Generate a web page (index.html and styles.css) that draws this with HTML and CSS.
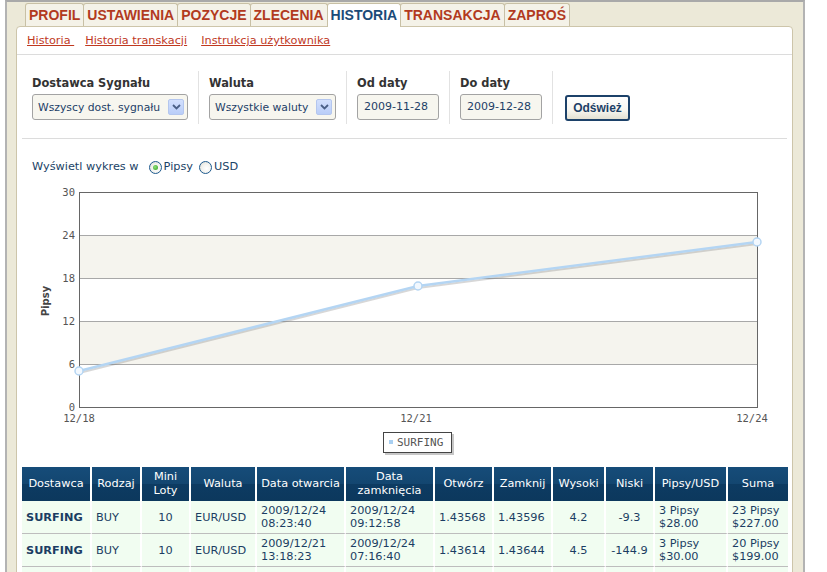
FILE: index.html
```html
<!DOCTYPE html>
<html lang="pl">
<head>
<meta charset="utf-8">
<title>Historia</title>
<link rel="stylesheet" href="styles.css">
</head>
<body>
<div class="frame">
  <nav class="tabs">
    <a class="tab">PROFIL</a>
    <a class="tab">USTAWIENIA</a>
    <a class="tab">POZYCJE</a>
    <a class="tab">ZLECENIA</a>
    <a class="tab active">HISTORIA</a>
    <a class="tab">TRANSAKCJA</a>
    <a class="tab">ZAPROŚ</a>
  </nav>
  <div class="panel">
    <div class="sublinks">
      <a class="sublink">Historia&nbsp;</a>
      <a class="sublink sublink-wide">Historia transkacji</a>
      <a class="sublink">Instrukcja użytkownika</a>
    </div>
    <div class="content">
      <div class="filters">
        <div class="fgroup">
          <div class="flabel">Dostawca Sygnału</div>
          <div class="select sel-provider"><span class="sel-text">Wszyscy dost. sygnału</span><span class="arrow"><svg width="9" height="6" viewBox="0 0 9 6"><path d="M1 1 L4.5 4.5 L8 1" stroke="#4a5f86" stroke-width="1.8" fill="none"/></svg></span></div>
        </div>
        <div class="fgroup">
          <div class="flabel">Waluta</div>
          <div class="select sel-currency"><span class="sel-text">Wszystkie waluty</span><span class="arrow"><svg width="9" height="6" viewBox="0 0 9 6"><path d="M1 1 L4.5 4.5 L8 1" stroke="#4a5f86" stroke-width="1.8" fill="none"/></svg></span></div>
        </div>
        <div class="fgroup">
          <div class="flabel">Od daty</div>
          <div class="dateinput">2009-11-28</div>
        </div>
        <div class="fgroup">
          <div class="flabel">Do daty</div>
          <div class="dateinput">2009-12-28</div>
        </div>
        <div class="fgroup fgroup-btn">
          <button class="btn">Odśwież</button>
        </div>
      </div>
      <div class="chart-opts">
        <span>Wyświetl wykres w</span>
        <span class="radio checked"></span><span>Pipsy</span>
        <span class="radio radio-usd"></span><span>USD</span>
      </div>
      <svg class="chart" width="766" height="280" viewBox="0 0 766 280">
        <rect x="57" y="55" width="678" height="43" fill="#f5f4ee"/>
        <rect x="57" y="141" width="678" height="43" fill="#f5f4ee"/>
        <g stroke="#a8a8a8" stroke-width="1">
          <line x1="57" y1="55.5" x2="735" y2="55.5"/>
          <line x1="57" y1="98.5" x2="735" y2="98.5"/>
          <line x1="57" y1="141.5" x2="735" y2="141.5"/>
          <line x1="57" y1="184.5" x2="735" y2="184.5"/>
        </g>
        <rect x="57.5" y="12.5" width="678" height="215" fill="none" stroke="#666" stroke-width="1"/>
        <g class="axis" text-anchor="end">
          <text x="53" y="16">30</text>
          <text x="53" y="59">24</text>
          <text x="53" y="102">18</text>
          <text x="53" y="145">12</text>
          <text x="53" y="188">6</text>
          <text x="53" y="231">0</text>
        </g>
        <g class="axis" text-anchor="middle">
          <text x="57" y="242">12/18</text>
          <text x="394" y="242">12/21</text>
          <text x="730" y="242">12/24</text>
        </g>
        <text class="ytitle" x="24" y="124" text-anchor="middle" transform="rotate(-90 24 121)">Pipsy</text>
        <polyline points="57,193 396,108 735,64" fill="none" stroke="#7a7a7a" stroke-opacity="0.3" stroke-width="2"/>
        <polyline points="57,191 396,106 735,62" fill="none" stroke="#b4d5f3" stroke-width="2.5"/>
        <g fill="#f2f8fe" stroke="#b4d5f3" stroke-width="1.5">
          <circle cx="57" cy="191" r="4"/>
          <circle cx="396" cy="106" r="4"/>
          <circle cx="735" cy="62" r="4"/>
        </g>
        <rect x="363" y="254" width="69" height="21" fill="#999" fill-opacity="0.55"/>
        <rect x="361.5" y="252.5" width="68" height="20" fill="#fff" stroke="#444"/>
        <rect x="367" y="260" width="4" height="4" fill="#a9d0f2"/>
        <text class="legend" x="375" y="266">SURFING</text>
      </svg>
      <table class="grid">
        <colgroup>
          <col class="c70"><col class="c50"><col class="c49"><col class="c66"><col class="c89"><col class="c89">
          <col class="c59"><col class="c59"><col class="c53"><col class="c49"><col class="c73"><col class="c60">
        </colgroup>
        <thead>
          <tr>
            <th>Dostawca</th><th>Rodzaj</th><th>Mini<br>Loty</th><th>Waluta</th><th>Data otwarcia</th><th>Data<br>zamknięcia</th>
            <th>Otwórz</th><th>Zamknij</th><th>Wysoki</th><th>Niski</th><th>Pipsy/USD</th><th>Suma</th>
          </tr>
        </thead>
        <tbody>
          <tr>
            <td class="prov">SURFING</td><td>BUY</td><td class="ctr">10</td><td>EUR/USD</td>
            <td>2009/12/24<br>08:23:40</td><td>2009/12/24<br>09:12:58</td>
            <td>1.43568</td><td>1.43596</td><td class="ctr">4.2</td><td class="ctr">-9.3</td>
            <td>3 Pipsy<br>$28.00</td><td>23 Pipsy<br>$227.00</td>
          </tr>
          <tr>
            <td class="prov">SURFING</td><td>BUY</td><td class="ctr">10</td><td>EUR/USD</td>
            <td>2009/12/21<br>13:18:23</td><td>2009/12/24<br>07:16:40</td>
            <td>1.43614</td><td>1.43644</td><td class="ctr">4.5</td><td class="ctr">-144.9</td>
            <td>3 Pipsy<br>$30.00</td><td>20 Pipsy<br>$199.00</td>
          </tr>
          <tr>
            <td></td><td></td><td></td><td></td><td></td><td></td>
            <td></td><td></td><td></td><td></td><td></td><td></td>
          </tr>
        </tbody>
      </table>
    </div>
  </div>
</div>
</body>
</html>
```
FILE: styles.css
```css
* { box-sizing: border-box; }

body {
  margin: 0;
  background: #ffffff;
  font-family: "DejaVu Sans", Verdana, sans-serif;
  font-size: 11.3px;
  color: #1b3d63;
}

.frame {
  margin-left: 5px;
  width: 800px;
  min-height: 620px;
  background: #ece9d8;
  border: 2px solid #b3b3b3;
  border-top-color: #a9a9a9;
  border-bottom: none;
  padding: 1px 10px 0 9px;
}

/* Tabs */
.tabs {
  display: flex;
  margin-left: 9px;
  height: 23px;
  position: relative;
  z-index: 1;
}

.tab {
  display: block;
  height: 23px;
  padding: 0 3px;
  margin-right: -1px;
  border: 1px solid #c8c0a5;
  border-bottom: none;
  border-radius: 3px 3px 0 0;
  background: #f4f2e8;
  color: #b23a1e;
  font-family: "Liberation Sans", Arial, sans-serif;
  font-weight: bold;
  font-size: 14px;
  line-height: 22px;
  text-decoration: none;
}

.tab.active {
  background: #ffffff;
  color: #1b4b78;
  height: 24px;
}

/* Panel */
.panel {
  background: #ffffff;
  border: 1px solid #cdc5aa;
  border-radius: 4px 4px 0 0;
  min-height: 600px;
}

.sublinks {
  display: flex;
  height: 28px;
  padding: 7px 0 0 10px;
  border-bottom: 1px solid #dcdcdc;
  line-height: 14px;
}

.sublink {
  color: #c0391f;
  text-decoration: underline;
  margin-right: 11px;
}

.sublink-wide { margin-right: 14px; }

.content {
  padding: 0 5px;
}

/* Filters */
.filters {
  display: flex;
  padding: 16px 0 14px;
  border-bottom: 1px solid #dcdcdc;
}

.fgroup {
  padding: 5px 10px 4px;
  border-right: 1px solid #e2e2e2;
}

.fgroup-btn {
  border-right: none;
  padding: 24px 12px 0;
}

.flabel {
  font-weight: bold;
  font-size: 11.4px;
  color: #333333;
  line-height: 14px;
  margin-bottom: 4px;
}

.select {
  display: flex;
  align-items: center;
  justify-content: space-between;
  height: 26px;
  border: 1px solid #a3a3a3;
  border-radius: 3px;
  background: #f7f6ef;
  padding: 0 3px 0 5px;
  color: #1d4067;
  font-size: 10.8px;
}

.sel-provider { width: 156px; }
.sel-currency { width: 127px; }

.arrow {
  display: flex;
  align-items: center;
  justify-content: center;
  width: 16px;
  height: 16px;
  background: linear-gradient(#d3e0fd, #b9cdf8);
  border: 1px solid #b4c6ee;
  border-radius: 2px;
}

.dateinput {
  width: 82px;
  height: 26px;
  border: 1px solid #a3a3a3;
  border-radius: 3px;
  background: #f7f6ef;
  padding-left: 6px;
  line-height: 24px;
  font-size: 11px;
  color: #1d4067;
}

.btn {
  width: 65px;
  height: 26px;
  border: 2px solid #1c4169;
  border-radius: 3px;
  background: linear-gradient(#ffffff 0%, #f7f6f0 60%, #e3e0d2 100%);
  font-family: "Liberation Sans", Arial, sans-serif;
  font-weight: bold;
  font-size: 12px;
  color: #1c3f66;
  padding: 0;
}

/* Chart options */
.chart-opts {
  display: flex;
  align-items: center;
  margin-top: 21px;
  height: 14px;
  padding-left: 10px;
  color: #1a4366;
  line-height: 14px;
}

.radio {
  position: relative;
  width: 13px;
  height: 13px;
  border-radius: 50%;
  border: 1px solid #1e5a8e;
  background: radial-gradient(circle at 60% 60%, #ffffff 0%, #f2f2ee 50%, #d8d6cc 100%);
  margin: 0 2px 0 10px;
}

.radio-usd { margin-left: 6px; }

.radio.checked::after {
  content: "";
  position: absolute;
  left: 3px;
  top: 3px;
  width: 5px;
  height: 5px;
  border-radius: 50%;
  background: radial-gradient(circle at 40% 40%, #8fe07a, #2f9e1d);
}

/* Chart */
.chart {
  display: block;
  margin-top: 6px;
}

.axis {
  font-family: "DejaVu Sans Mono", monospace;
  font-size: 10.5px;
  fill: #555555;
}

.ytitle {
  font-family: "DejaVu Sans", sans-serif;
  font-weight: bold;
  font-size: 10px;
  fill: #444444;
}

.legend {
  font-family: "DejaVu Sans Mono", monospace;
  font-size: 11px;
  fill: #555555;
}

/* Table */
.grid {
  margin-top: 7px;
  width: 766px;
  table-layout: fixed;
  border-collapse: separate;
  border-spacing: 0;
}

.c70 { width: 70px; }
.c50 { width: 50px; }
.c49 { width: 49px; }
.c66 { width: 66px; }
.c89 { width: 89px; }
.c59 { width: 59px; }
.c53 { width: 53px; }
.c73 { width: 73px; }
.c60 { width: 60px; }

.grid thead tr { height: 34px; }

.grid th {
  background: linear-gradient(#164c79 0%, #134670 50%, #0d3b62 50%, #0c385d 100%);
  color: #ffffff;
  font-weight: normal;
  line-height: 14px;
  text-align: center;
  padding: 0 2px;
  border-right: 2px solid #ffffff;
}

.grid tbody tr { height: 33px; }

.grid td {
  background: #f1fdf1;
  color: #1b3d63;
  line-height: 13px;
  padding: 0 4px;
  border-right: 2px solid #ffffff;
  border-bottom: 1px solid #bdbdbd;
  vertical-align: middle;
  white-space: nowrap;
}

.grid th:last-child,
.grid td:last-child { border-right: none; }

.grid td.prov { font-weight: bold; }
.grid td.ctr { text-align: center; }
```
